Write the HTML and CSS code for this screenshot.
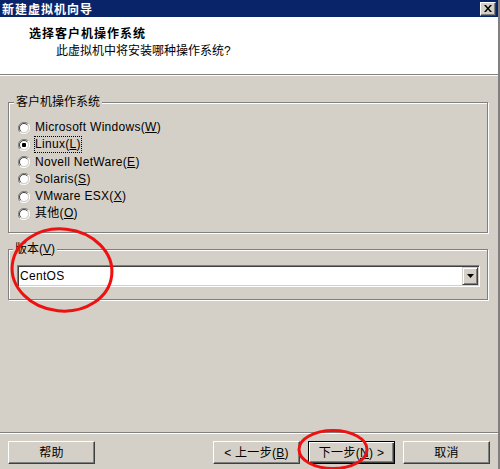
FILE: index.html
```html
<!DOCTYPE html>
<html lang="zh-CN">
<head>
<meta charset="utf-8">
<title>新建虚拟机向导</title>
<link rel="stylesheet" href="styles.css">
</head>
<body>
<div class="window">
  <div class="titlebar">
    <span class="title-text">新建虚拟机向导</span>
    <span class="close-btn">
      <svg width="8" height="7" viewBox="0 0 8 7"><path d="M0 0h2l2 2.5L6 0h2L5 3.5 8 7H6L4 4.5 2 7H0l3-3.5z" fill="#000"/></svg>
    </span>
  </div>
  <div class="header">
    <div class="header-title">选择客户机操作系统</div>
    <div class="header-sub">此虚拟机中将安装哪种操作系统?</div>
  </div>
  <div class="content">
    <fieldset class="group group-os">
      <legend class="group-legend">客户机操作系统</legend>
      <div class="radio-row">
        <svg class="radio" width="12" height="12" viewBox="0 0 12 12"><circle cx="6" cy="6" r="4.5" fill="#fff"/><path d="M10.2 1.8A5.95 5.95 0 0 0 1.8 10.2" stroke="#808080" fill="none"/><path d="M1.8 10.2A5.95 5.95 0 0 0 10.2 1.8" stroke="#fff" fill="none"/><path d="M9.2 2.8A4.5 4.5 0 0 0 2.8 9.2" stroke="#404040" fill="none"/><path d="M2.8 9.2A4.5 4.5 0 0 0 9.2 2.8" stroke="#d4d0c8" fill="none"/></svg>
        <span class="label">Microsoft Windows(<u>W</u>)</span>
      </div>
      <div class="radio-row">
        <svg class="radio" width="12" height="12" viewBox="0 0 12 12"><circle cx="6" cy="6" r="4.5" fill="#fff"/><path d="M10.2 1.8A5.95 5.95 0 0 0 1.8 10.2" stroke="#808080" fill="none"/><path d="M1.8 10.2A5.95 5.95 0 0 0 10.2 1.8" stroke="#fff" fill="none"/><path d="M9.2 2.8A4.5 4.5 0 0 0 2.8 9.2" stroke="#404040" fill="none"/><path d="M2.8 9.2A4.5 4.5 0 0 0 9.2 2.8" stroke="#d4d0c8" fill="none"/><rect x="4" y="4" width="4" height="4" rx="1" fill="#000"/></svg>
        <span class="label label-focus">Linux(<u>L</u>)</span>
      </div>
      <div class="radio-row">
        <svg class="radio" width="12" height="12" viewBox="0 0 12 12"><circle cx="6" cy="6" r="4.5" fill="#fff"/><path d="M10.2 1.8A5.95 5.95 0 0 0 1.8 10.2" stroke="#808080" fill="none"/><path d="M1.8 10.2A5.95 5.95 0 0 0 10.2 1.8" stroke="#fff" fill="none"/><path d="M9.2 2.8A4.5 4.5 0 0 0 2.8 9.2" stroke="#404040" fill="none"/><path d="M2.8 9.2A4.5 4.5 0 0 0 9.2 2.8" stroke="#d4d0c8" fill="none"/></svg>
        <span class="label">Novell NetWare(<u>E</u>)</span>
      </div>
      <div class="radio-row">
        <svg class="radio" width="12" height="12" viewBox="0 0 12 12"><circle cx="6" cy="6" r="4.5" fill="#fff"/><path d="M10.2 1.8A5.95 5.95 0 0 0 1.8 10.2" stroke="#808080" fill="none"/><path d="M1.8 10.2A5.95 5.95 0 0 0 10.2 1.8" stroke="#fff" fill="none"/><path d="M9.2 2.8A4.5 4.5 0 0 0 2.8 9.2" stroke="#404040" fill="none"/><path d="M2.8 9.2A4.5 4.5 0 0 0 9.2 2.8" stroke="#d4d0c8" fill="none"/></svg>
        <span class="label">Solaris(<u>S</u>)</span>
      </div>
      <div class="radio-row">
        <svg class="radio" width="12" height="12" viewBox="0 0 12 12"><circle cx="6" cy="6" r="4.5" fill="#fff"/><path d="M10.2 1.8A5.95 5.95 0 0 0 1.8 10.2" stroke="#808080" fill="none"/><path d="M1.8 10.2A5.95 5.95 0 0 0 10.2 1.8" stroke="#fff" fill="none"/><path d="M9.2 2.8A4.5 4.5 0 0 0 2.8 9.2" stroke="#404040" fill="none"/><path d="M2.8 9.2A4.5 4.5 0 0 0 9.2 2.8" stroke="#d4d0c8" fill="none"/></svg>
        <span class="label">VMware ESX(<u>X</u>)</span>
      </div>
      <div class="radio-row">
        <svg class="radio" width="12" height="12" viewBox="0 0 12 12"><circle cx="6" cy="6" r="4.5" fill="#fff"/><path d="M10.2 1.8A5.95 5.95 0 0 0 1.8 10.2" stroke="#808080" fill="none"/><path d="M1.8 10.2A5.95 5.95 0 0 0 10.2 1.8" stroke="#fff" fill="none"/><path d="M9.2 2.8A4.5 4.5 0 0 0 2.8 9.2" stroke="#404040" fill="none"/><path d="M2.8 9.2A4.5 4.5 0 0 0 9.2 2.8" stroke="#d4d0c8" fill="none"/></svg>
        <span class="label">其他(<u>O</u>)</span>
      </div>
    </fieldset>
    <fieldset class="group group-ver">
      <legend class="group-legend">版本(<u>V</u>)</legend>
      <div class="combo">
        <span class="combo-text">CentOS</span>
        <span class="combo-btn">
          <svg width="7" height="4" viewBox="0 0 7 4"><path d="M0 0h7L3.5 4z" fill="#000"/></svg>
        </span>
      </div>
    </fieldset>
  </div>
  <div class="footer">
    <span class="btn">帮助</span>
    <span class="btn-spacer"></span>
    <span class="btn">&lt; 上一步(<u>B</u>)</span>
    <span class="btn btn-default">下一步(<u>N</u>) &gt;</span>
    <span class="btn">取消</span>
  </div>
  <svg class="annotation" width="500" height="469" viewBox="0 0 500 469">
    <ellipse cx="62" cy="270" rx="50" ry="41" transform="rotate(6 62 270)" fill="none" stroke="#ee1111" stroke-width="3"/>
    <ellipse cx="333" cy="449.5" rx="34" ry="19" fill="none" stroke="#ee1111" stroke-width="3"/>
  </svg>
</div>
</body>
</html>
```

FILE: styles.css
```css
* { box-sizing: border-box; }
html, body {
  margin: 0;
  padding: 0;
  background: #d4d0c8;
}
body {
  font-family: "Liberation Sans", "Noto Sans CJK SC", sans-serif;
  font-size: 12px;
  color: #000;
}
.window {
  position: relative;
  width: 500px;
  height: 469px;
  display: flex;
  flex-direction: column;
  background: #d4d0c8;
  border-right: 2px solid #808080;
  overflow: hidden;
}
.titlebar {
  height: 17px;
  background: #0a246a;
  display: flex;
  align-items: center;
  justify-content: space-between;
  padding: 0 2px 0 2px;
}
.title-text {
  color: #fff;
  font-weight: bold;
  font-size: 12px;
  line-height: 17px;
  letter-spacing: 1px;
  font-family: "Noto Sans CJK SC", sans-serif;
}
.close-btn {
  width: 16px;
  height: 14px;
  background: #d4d0c8;
  border: 1px solid;
  border-color: #fff #404040 #404040 #fff;
  box-shadow: inset -1px -1px 0 #808080;
  display: flex;
  align-items: center;
  justify-content: center;
  padding-right: 1px;
}
.close-btn svg { display: block; }
.header {
  height: 58px;
  background: #fff;
  border-bottom: 1px solid #808080;
  box-shadow: 0 1px 0 #fff;
  padding-top: 8px;
  position: relative;
  z-index: 1;
}
.header-title {
  font-family: "Noto Sans CJK SC", sans-serif;
  font-weight: bold;
  font-size: 12px;
  line-height: 16px;
  letter-spacing: 1px;
  padding-left: 29px;
}
.header-sub {
  font-size: 12px;
  line-height: 16px;
  margin-top: 2px;
  padding-left: 56px;
}
.content {
  flex: 1;
  padding: 20px 0 0 8px;
}
.group {
  margin: 0;
  width: 480px;
  border: 1px solid #808080;
  box-shadow: 1px 1px 0 #fff, inset 1px 1px 0 #fff;
  padding: 0 8px 0 9px;
  min-inline-size: 0;
}
.group-legend {
  padding: 0 2px;
  margin-left: -4px;
  line-height: 15px;
  font-size: 12px;
  background: #d4d0c8;
}
.group-os {
  padding-top: 9px;
  padding-bottom: 9.5px;
}
.group-ver {
  margin-top: 9px;
  padding-top: 8px;
  padding-bottom: 12px;
  padding-left: 8px;
  padding-right: 6px;
}
.radio-row {
  height: 17.25px;
  display: flex;
  align-items: center;
}
.radio { display: block; flex: none; }
.label {
  margin-left: 4px;
  border: 1px solid transparent;
  line-height: 15px;
  letter-spacing: 0.3px;
  white-space: nowrap;
}
.label-focus {
  border: 1px dotted #000;
}
.combo {
  height: 22px;
  width: 463px;
  background: #fff;
  border: 1px solid;
  border-color: #808080 #fff #fff #808080;
  box-shadow: inset 1px 1px 0 #404040, inset -1px -1px 0 #d4d0c8;
  display: flex;
  align-items: center;
  justify-content: space-between;
  padding: 1px 1px 1px 2px;
}
.combo-text {
  line-height: 18px;
  letter-spacing: 0.3px;
}
.combo-btn {
  width: 16px;
  height: 18px;
  background: #d4d0c8;
  border: 1px solid;
  border-color: #d4d0c8 #404040 #404040 #d4d0c8;
  box-shadow: inset 1px 1px 0 #fff, inset -1px -1px 0 #808080;
  display: flex;
  align-items: center;
  justify-content: center;
}
.combo-btn svg { display: block; }
.footer {
  height: 37px;
  border-top: 1px solid #808080;
  box-shadow: inset 0 1px 0 #fff;
  display: flex;
  align-items: flex-start;
  gap: 8px;
  padding: 8px 8px 0 8px;
}
.btn-spacer { flex: 1; }
.btn {
  width: 87px;
  height: 23px;
  background: #d4d0c8;
  border: 1px solid;
  border-color: #fff #404040 #404040 #fff;
  box-shadow: inset -1px -1px 0 #808080;
  display: flex;
  align-items: center;
  justify-content: center;
  font-size: 12px;
  line-height: 14px;
  letter-spacing: 0.3px;
  white-space: nowrap;
}
.btn-default {
  border-color: #000;
  box-shadow: inset 1px 1px 0 #fff, inset -1px -1px 0 #404040, inset -2px -2px 0 #808080;
}
.annotation {
  position: absolute;
  left: 0;
  top: 0;
  pointer-events: none;
  z-index: 5;
}
```
